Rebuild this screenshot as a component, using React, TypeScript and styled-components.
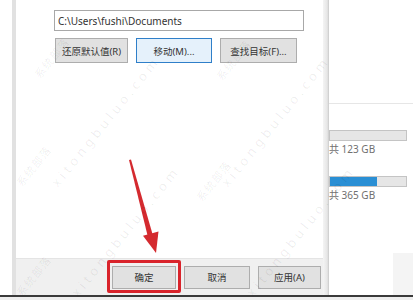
import React from "react";
import styled, { createGlobalStyle } from "styled-components";

const GlobalStyle = createGlobalStyle`
  html, body {
    margin: 0;
    padding: 0;
    background: #ffffff;
  }
  body {
    width: 413px;
    height: 300px;
    overflow: hidden;
    font-family: "Noto Sans", "Noto Sans CJK SC", sans-serif;
  }
`;

const Page = styled.div`
  position: relative;
  width: 413px;
  height: 300px;
  display: flex;
  flex-direction: column;
  background: #ffffff;
  overflow: hidden;
`;

const Main = styled.div`
  display: flex;
  height: 295px;
`;

const LeftMargin = styled.div`
  width: 12px;
  flex: none;
`;

const Dialog = styled.div`
  width: 317px;
  flex: none;
  display: flex;
  border-left: 4px solid #e1e1e1;
  box-sizing: border-box;
`;

const DialogBody = styled.div`
  flex: 1;
  display: flex;
  flex-direction: column;
`;

const RightFrame = styled.div`
  width: 6px;
  flex: none;
  background: linear-gradient(to right, #f4f4f4, #e6e6e6 70%, #c9c9c9);
`;

const Content = styled.div`
  flex: 1;
  display: flex;
  flex-direction: column;
  padding: 10px 0 0 38px;
  background: #ffffff;
`;

const PathBox = styled.div`
  width: 250px;
  height: 21px;
  box-sizing: border-box;
  border: 1px solid #a8a8a8;
  display: flex;
  align-items: center;
  padding-left: 3px;
  font-size: 10px;
  color: #333333;
  background: #ffffff;
  white-space: nowrap;
`;

const ButtonRow = styled.div`
  display: flex;
  margin-top: 7px;
  margin-left: 1px;
  gap: 8px;
`;

const Button = styled.div<{ $w: number; $focused?: boolean }>`
  width: ${(p) => p.$w}px;
  height: 25px;
  box-sizing: border-box;
  display: flex;
  align-items: center;
  justify-content: center;
  font-size: 9.5px;
  color: #333333;
  white-space: nowrap;
  background: ${(p) => (p.$focused ? "#e5f1fb" : "#e1e1e1")};
  border: 1px solid ${(p) => (p.$focused ? "#2f7fc9" : "#adadad")};
`;

const Footer = styled.div`
  height: 37px;
  background: #f0f0f0;
  border-top: 1px solid #e4e4e4;
  box-sizing: border-box;
  display: flex;
  align-items: center;
  justify-content: flex-end;
  gap: 8px;
  padding-right: 2px;
`;

const FooterButton = styled.div<{ $w: number }>`
  width: ${(p) => p.$w}px;
  height: 23px;
  box-sizing: border-box;
  display: flex;
  align-items: center;
  justify-content: center;
  font-size: 9.5px;
  color: #333333;
  white-space: nowrap;
  background: #e1e1e1;
  border: 1px solid #adadad;
`;

const RightPanel = styled.div`
  flex: 1;
  display: flex;
  flex-direction: column;
  position: relative;
`;

const Divider = styled.div`
  margin-top: 103px;
  height: 1px;
  background: #e6e6e6;
`;

const Drive = styled.div<{ $top: number }>`
  margin-top: ${(p) => p.$top}px;
  display: flex;
  flex-direction: column;
`;

const Bar = styled.div`
  width: 78px;
  height: 11px;
  box-sizing: border-box;
  border: 1px solid #c4c4c4;
  background: #e6e6e6;
  display: flex;
`;

const BarFill = styled.div`
  height: 100%;
  background: #2a8fd4;
`;

const DriveText = styled.div`
  margin-top: 2px;
  font-size: 10px;
  line-height: 12px;
  color: #707070;
  white-space: nowrap;
`;

const CornerBox = styled.div`
  position: absolute;
  right: 0;
  bottom: 0;
  width: 20px;
  height: 42px;
  background: #f4f4f4;
`;

const BottomLine = styled.div`
  height: 2px;
  background: #3a3a3a;
`;

const BottomRest = styled.div`
  flex: 1;
  background: #eeeeee;
`;

const Highlight = styled.div`
  position: absolute;
  left: 107px;
  top: 260px;
  width: 74px;
  height: 33px;
  box-sizing: border-box;
  border: 3px solid #d9232b;
  border-radius: 2px;
`;

const ArrowSvg = styled.svg`
  position: absolute;
  left: 0;
  top: 0;
  pointer-events: none;
`;

const Watermark = styled.div<{ $x: number; $y: number; $cjk?: boolean }>`
  position: absolute;
  left: ${(p) => p.$x}px;
  top: ${(p) => p.$y - 16}px;
  height: 16px;
  line-height: 16px;
  transform: rotate(-51deg);
  transform-origin: 0 100%;
  font-size: ${(p) => (p.$cjk ? 11 : 13)}px;
  letter-spacing: ${(p) => (p.$cjk ? 1 : 4)}px;
  color: rgba(0, 0, 0, 0.07);
  white-space: nowrap;
  pointer-events: none;
`;

const latinMarks = [
  { x: 60, y: 190 },
  { x: 80, y: 300 },
  { x: 230, y: 190 },
  { x: 255, y: 300 },
];

const cjkMarks = [
  { x: 43, y: 82 },
  { x: 25, y: 190 },
  { x: 25, y: 300 },
  { x: 205, y: 205 },
  { x: 225, y: 84 },
];

export default function App() {
  return (
    <Page>
      <GlobalStyle />
      <Main>
        <LeftMargin />
        <Dialog>
          <DialogBody>
            <Content>
              <PathBox>C:\Users\fushi\Documents</PathBox>
              <ButtonRow>
                <Button $w={73}>还原默认值(R)</Button>
                <Button $w={76} $focused>
                  移动(M)...
                </Button>
                <Button $w={77}>查找目标(F)...</Button>
              </ButtonRow>
            </Content>
            <Footer>
              <FooterButton $w={64}>确定</FooterButton>
              <FooterButton $w={66}>取消</FooterButton>
              <FooterButton $w={63}>应用(A)</FooterButton>
            </Footer>
          </DialogBody>
          <RightFrame />
        </Dialog>
        <RightPanel>
          <Divider />
          <Drive $top={26}>
            <Bar />
            <DriveText>共 123 GB</DriveText>
          </Drive>
          <Drive $top={21}>
            <Bar>
              <BarFill style={{ width: "62%" }} />
            </Bar>
            <DriveText>共 365 GB</DriveText>
          </Drive>
          <CornerBox />
        </RightPanel>
      </Main>
      <BottomLine />
      <BottomRest />
      <Highlight />
      <ArrowSvg width="413" height="300" viewBox="0 0 413 300">
        <polygon points="129,160 131,159.5 152.5,234 147.5,235.3" fill="#d42a2f" />
        <polygon points="156,253 158.5,231.6 143,235.8" fill="#d42a2f" />
      </ArrowSvg>
      {latinMarks.map((m, i) => (
        <Watermark key={"l" + i} $x={m.x} $y={m.y}>
          xitongbuluo.com
        </Watermark>
      ))}
      {cjkMarks.map((m, i) => (
        <Watermark key={"c" + i} $x={m.x} $y={m.y} $cjk>
          系统部落
        </Watermark>
      ))}
    </Page>
  );
}
